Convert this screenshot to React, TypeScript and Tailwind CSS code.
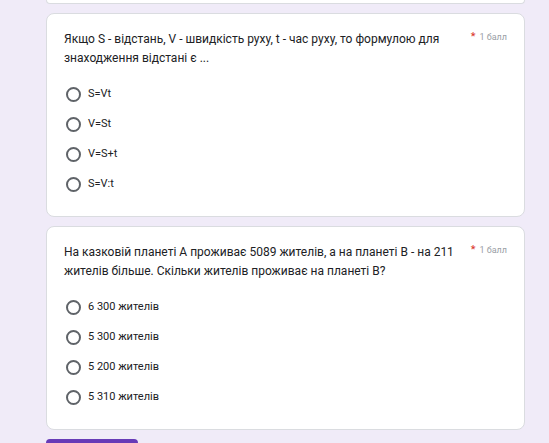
import React from 'react';

type Question = {
  text: string;
  options: string[];
};

const questions: Question[] = [
  {
    text: 'Якщо S - відстань, V - швидкість руху, t - час руху, то формулою для знаходження відстані є ...',
    options: ['S=Vt', 'V=St', 'V=S+t', 'S=V:t'],
  },
  {
    text: 'На казковій планеті А проживає 5089 жителів, а на планеті В - на 211 жителів більше. Скільки жителів проживає на планеті В?',
    options: ['6 300 жителів', '5 300 жителів', '5 200 жителів', '5 310 жителів'],
  },
];

const QuestionCard: React.FC<{ q: Question }> = ({ q }) => {
  return (
    <div className="h-[204px] bg-white border border-[#dadce0] rounded-lg px-[17px] pt-[16px]">
      <div className="flex items-start">
        <p className="w-[396px] text-[12px] leading-[19px] text-[#202124]">{q.text}</p>
        <div className="ml-auto flex items-start gap-[4px] pt-[1px]">
          <span className="text-[11px] leading-[12px] text-[#d93025]">*</span>
          <span className="text-[9px] leading-[12px] text-[#9aa0a6]">1 балл</span>
        </div>
      </div>
      <div className="mt-[11px] flex flex-col">
        {q.options.map((opt) => (
          <div key={opt} className="h-[30px] flex items-center">
            <div className="ml-[2px] w-[15px] h-[15px] rounded-full border-2 border-[#5f6368]" />
            <span className="ml-[7px] text-[11px] text-[#202124]">{opt}</span>
          </div>
        ))}
      </div>
    </div>
  );
};

export default function App() {
  return (
    <div className="w-[549px] h-[443px] overflow-hidden bg-[#f0ebf8] font-['Roboto',sans-serif]">
      <div className="ml-[46px] w-[479px] flex flex-col gap-[9px]">
        {/* tail of the previous card */}
        <div className="h-[4px] bg-white border border-t-0 border-[#dadce0] rounded-b-lg" />
        {questions.map((q, i) => (
          <QuestionCard key={i} q={q} />
        ))}
        <div className="w-[92px] h-[36px] rounded bg-[#673ab7]" />
      </div>
    </div>
  );
}
